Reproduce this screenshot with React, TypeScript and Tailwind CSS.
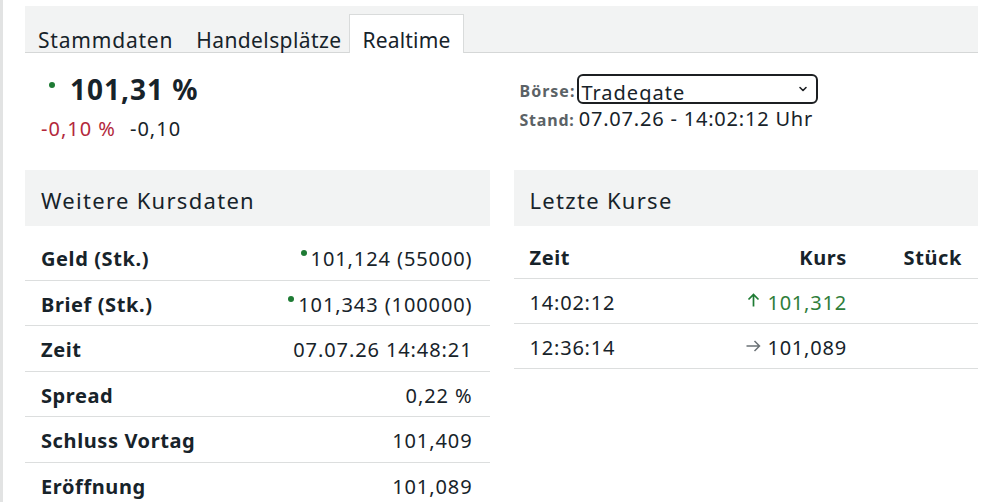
import React from "react";

const font = { fontFamily: '"Noto Sans", "Liberation Sans", sans-serif' };

const kursdaten: { label: string; value: string; dot?: boolean }[] = [
  { label: "Geld (Stk.)", value: "101,124 (55000)", dot: true },
  { label: "Brief (Stk.)", value: "101,343 (100000)", dot: true },
  { label: "Zeit", value: "07.07.26 14:48:21" },
  { label: "Spread", value: "0,22 %" },
  { label: "Schluss Vortag", value: "101,409" },
  { label: "Eröffnung", value: "101,089" },
];

const kurse = [
  { zeit: "14:02:12", kurs: "101,312", up: true },
  { zeit: "12:36:14", kurs: "101,089", up: false },
];

function Dot({ className = "" }: { className?: string }) {
  return <span className={`inline-block w-[6px] h-[6px] rounded-full bg-[#1e7b34] ${className}`} />;
}

export default function App() {
  return (
    <div style={font} className="min-h-[502px] bg-white border-l-[3px] border-[#e2e3e3] text-[#17232a] overflow-hidden">
      <div className="pl-[22px] pr-[21px] pt-[6px]">
        {/* Tabs */}
        <div className="h-[47px] bg-[#f2f3f3] border-b border-[#d5d7d7] flex items-end pl-[13px] text-[21px]">
          <div className="pr-[23px] leading-[24px] tracking-[0.8px]">Stammdaten</div>
          <div className="pr-[8px] leading-[24px] tracking-[0.4px]">Handelsplätze</div>
          <div className="bg-white border border-b-0 border-[#d9dbdb] -mb-px h-[39px] px-[12px] flex items-end leading-[24px] pb-px tracking-[0.2px]">
            Realtime
          </div>
        </div>

        {/* Price + Börse */}
        <div className="grid grid-cols-2 gap-6 h-[117px]">
          <div>
            <div className="flex items-start pl-[24px] pt-[20px]">
              <Dot className="mt-[9px]" />
              <span className="ml-[15px] text-[28px] font-bold leading-[32px] tracking-[1px]">101,31 %</span>
            </div>
            <div className="pl-[16px] pt-[12px] text-[20px] leading-[24px] tracking-[1px]">
              <span className="text-[#b3283c]">-0,10 %</span>
              <span className="ml-[14px]">-0,10</span>
            </div>
          </div>
          <div className="pl-[6px] pt-[21px]">
            <div className="flex items-center">
              <span className="text-[16px] font-bold text-[#5b6266] pt-[4px] tracking-[1px]">Börse:</span>
              <div className="ml-[2px] w-[241px] h-[30px] border-2 border-[#1c1f22] rounded-[6px] overflow-hidden flex items-start justify-between pl-[2px] pr-[8px]">
                <span className="text-[20px] leading-[20px] pt-[7px] tracking-[1px]">Tradegate</span>
                <svg width="10" height="10" viewBox="0 0 10 10" className="mt-[8px]">
                  <path d="M2 3.5 L5 6.5 L8 3.5" fill="none" stroke="#1c1f22" strokeWidth="1.6" strokeLinecap="round" strokeLinejoin="round" />
                </svg>
              </div>
            </div>
            <div className="flex items-center mt-[1px]">
              <span className="text-[16px] font-bold text-[#5b6266] pt-[2px] tracking-[0.8px]">Stand:</span>
              <span className="ml-[4px] text-[20px] leading-[28px] tracking-[0.8px]">07.07.26 - 14:02:12 Uhr</span>
            </div>
          </div>
        </div>

        {/* Panels */}
        <div className="grid grid-cols-2 gap-6">
          <div>
            <div className="h-[56px] bg-[#f2f3f3] flex items-center px-4 pt-[4px] text-[22px] tracking-[1.3px]">Weitere Kursdaten</div>
            <div className="pt-[9px]">
              {kursdaten.map((r, i) => (
                <div
                  key={r.label}
                  className={`h-[45.5px] flex items-center justify-between pl-4 pr-[17px] pt-[4px] text-[20px] ${i < kursdaten.length - 1 ? "border-b border-[#dcdede]" : ""}`}
                >
                  <span className="font-bold tracking-[0.6px]">{r.label}</span>
                  <span className="flex items-start tracking-[0.9px]">
                    {r.dot && <Dot className="mt-[6px] mr-[4px]" />}
                    {r.value}
                  </span>
                </div>
              ))}
            </div>
          </div>
          <div>
            <div className="h-[56px] bg-[#f2f3f3] flex items-center px-4 pt-[4px] text-[22px] tracking-[1.3px]">Letzte Kurse</div>
            <div className="pt-[8px]">
              <div className="h-[45px] flex items-center pl-4 pr-[16px] pt-[3px] text-[20px] font-bold tracking-[0.6px] border-b border-[#dcdede]">
                <span className="flex-1">Zeit</span>
                <span className="w-[120px] text-right">Kurs</span>
                <span className="w-[115px] text-right">Stück</span>
              </div>
              {kurse.map((k) => (
                <div key={k.zeit} className="h-[45px] flex items-center pl-4 pr-[16px] pt-[4px] text-[20px] tracking-[0.8px] border-b border-[#dcdede]">
                  <span className="flex-1">{k.zeit}</span>
                  <span className={`w-[140px] flex justify-end items-center ${k.up ? "text-[#2f7d3a]" : ""}`}>
                    {k.up ? (
                      <svg width="13" height="14" viewBox="0 0 13 14" className="mr-[7px] -mt-[7px]">
                        <path d="M6.5 13.5 V1.5 M1.5 6.5 L6.5 1.5 L11.5 6.5" fill="none" stroke="#1e7b34" strokeWidth="1.7" />
                      </svg>
                    ) : (
                      <svg width="15" height="12" viewBox="0 0 15 12" className="mr-[6px] -mt-[4px]">
                        <path d="M0.5 6 H13.5 M8.5 1 L13.5 6 L8.5 11" fill="none" stroke="#6b7276" strokeWidth="1.5" />
                      </svg>
                    )}
                    {k.kurs}
                  </span>
                  <span className="w-[115px]" />
                </div>
              ))}
            </div>
          </div>
        </div>
      </div>
    </div>
  );
}
